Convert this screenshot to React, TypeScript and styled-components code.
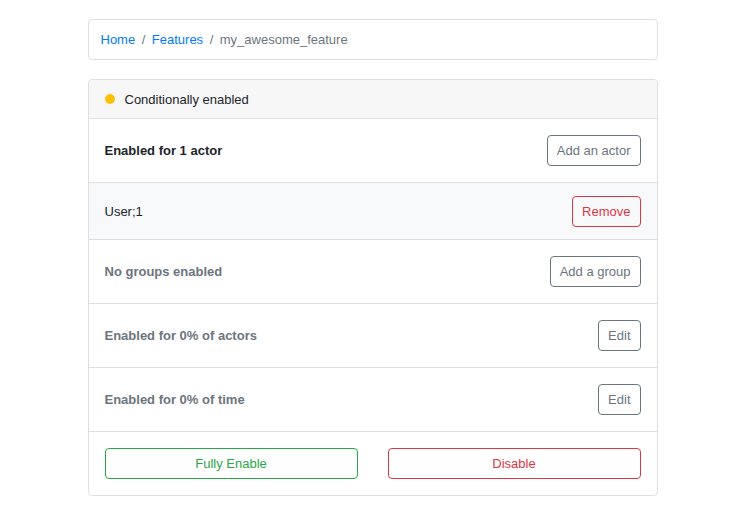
import React from "react";
import styled, { createGlobalStyle } from "styled-components";

const GlobalStyle = createGlobalStyle`
  html, body {
    margin: 0;
    padding: 0;
    background: #ffffff;
    font-family: "Liberation Sans", Arial, Helvetica, sans-serif;
    font-size: 13px;
    color: #212529;
  }
  * { box-sizing: border-box; }
`;

const Page = styled.div`
  width: 570px;
  margin: 19px auto 0;
  display: flex;
  flex-direction: column;
  gap: 19px;
`;

const Breadcrumb = styled.nav`
  height: 41px;
  display: flex;
  align-items: center;
  padding: 0 12px;
  border: 1px solid #dfdfdf;
  border-radius: 4px;
  background: #ffffff;
  gap: 6px;
`;

const Crumb = styled.a`
  color: #007bff;
  text-decoration: none;
`;

const Sep = styled.span`
  color: #6c757d;
  padding: 0 0.5px;
`;

const Current = styled.span`
  color: #6c757d;
`;

const Card = styled.section`
  border: 1px solid #dfdfdf;
  border-radius: 4px;
  overflow: hidden;
`;

const CardHeader = styled.header`
  height: 39px;
  display: flex;
  align-items: center;
  gap: 10px;
  padding: 0 16px;
  background: #f7f7f7;
  border-bottom: 1px solid #dfdfdf;
`;

const Dot = styled.span`
  width: 10px;
  height: 10px;
  border-radius: 50%;
  background: #ffc107;
`;

const Row = styled.div<{ $shaded?: boolean }>`
  display: flex;
  align-items: center;
  justify-content: space-between;
  padding: ${(p) => (p.$shaded ? "13px 16px 12px" : "16px")};
  background: ${(p) => (p.$shaded ? "#f8f9fa" : "#ffffff")};
  border-bottom: 1px solid #dfdfdf;
`;

const Label = styled.span<{ $muted?: boolean; $bold?: boolean }>`
  font-weight: ${(p) => (p.$bold ? 700 : 400)};
  color: ${(p) => (p.$muted ? "#6c757d" : "#212529")};
`;

const tones = {
  secondary: "#6c757d",
  danger: "#dc3545",
  success: "#28a745",
};

const Button = styled.button<{ $tone: keyof typeof tones; $block?: boolean }>`
  height: 31px;
  padding: 0 9px;
  font-family: inherit;
  font-size: 13px;
  background: transparent;
  color: ${(p) => tones[p.$tone]};
  border: 1px solid ${(p) => tones[p.$tone]};
  border-radius: 4px;
  cursor: pointer;
  ${(p) => (p.$block ? "width: 100%;" : "")}
`;

const Footer = styled.div`
  display: grid;
  grid-template-columns: 1fr 1fr;
  gap: 30px;
  padding: 16px;
`;

export default function App() {
  return (
    <>
      <GlobalStyle />
      <Page>
        <Breadcrumb>
          <Crumb href="#">Home</Crumb>
          <Sep>/</Sep>
          <Crumb href="#">Features</Crumb>
          <Sep>/</Sep>
          <Current>my_awesome_feature</Current>
        </Breadcrumb>

        <Card>
          <CardHeader>
            <Dot />
            <span>Conditionally enabled</span>
          </CardHeader>

          <Row>
            <Label $bold>Enabled for 1 actor</Label>
            <Button $tone="secondary">Add an actor</Button>
          </Row>
          <Row $shaded>
            <Label>User;1</Label>
            <Button $tone="danger">Remove</Button>
          </Row>
          <Row>
            <Label $bold $muted>No groups enabled</Label>
            <Button $tone="secondary">Add a group</Button>
          </Row>
          <Row>
            <Label $bold $muted>Enabled for 0% of actors</Label>
            <Button $tone="secondary">Edit</Button>
          </Row>
          <Row>
            <Label $bold $muted>Enabled for 0% of time</Label>
            <Button $tone="secondary">Edit</Button>
          </Row>

          <Footer>
            <Button $tone="success" $block>Fully Enable</Button>
            <Button $tone="danger" $block>Disable</Button>
          </Footer>
        </Card>
      </Page>
    </>
  );
}
